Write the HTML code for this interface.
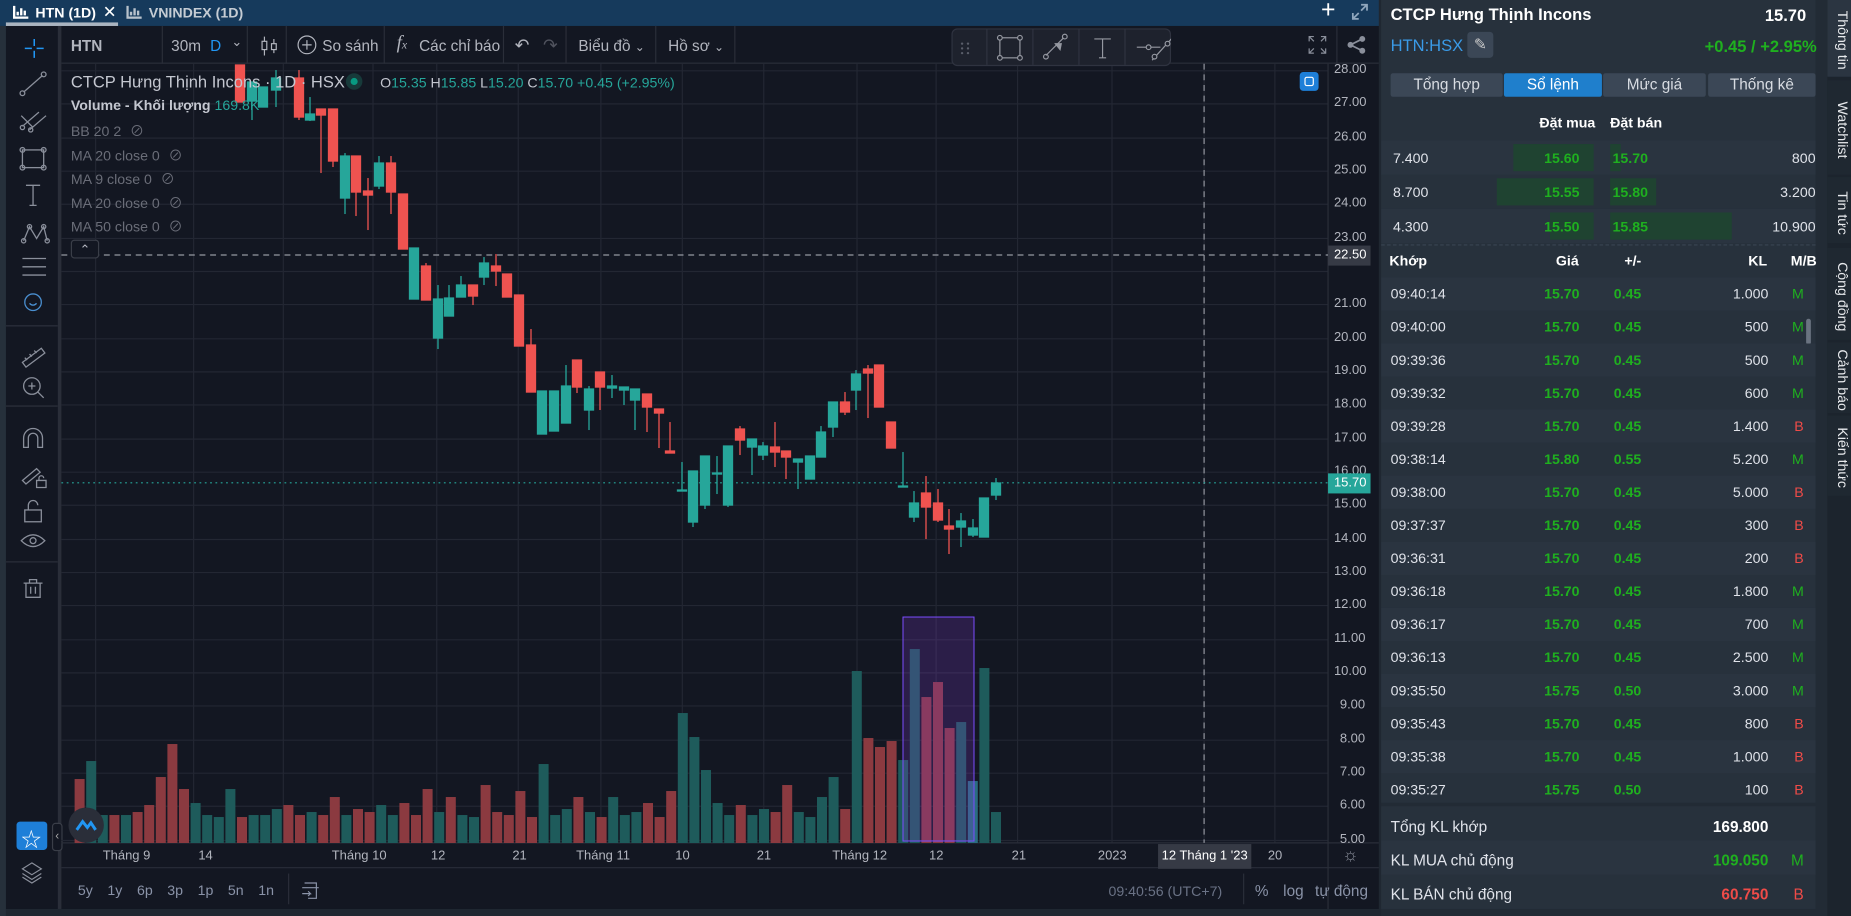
<!DOCTYPE html>
<html><head><meta charset="utf-8">
<style>
*{margin:0;padding:0;box-sizing:border-box}
html,body{width:1851px;height:916px;overflow:hidden;background:#1f2731}
body{font-family:"Liberation Sans","Noto Sans CJK SC",sans-serif}
#w{position:absolute;left:0;top:0;width:1568px;height:776px;transform:scale(1.18048);transform-origin:0 0;background:#1f2731}
.a{position:absolute;white-space:nowrap}
.tb{color:#b2b5be;font-size:13px}
.sep{position:absolute;top:22px;width:1px;height:32px;background:#2a2e39}
.pl{position:absolute;left:1130px;font-size:11px;color:#b2b5be}
.ind{position:absolute;left:60px;font-size:12px;color:#6a6d78}
.rp{position:absolute;left:1170px;width:378px;background:#27313c}
.row{position:absolute;left:1170px;width:368px;height:28px;font-size:12px;color:#e0e3ea}
.row span{position:absolute;top:7px}
.g{color:#1fb01f;font-weight:bold}
.vt{position:absolute;left:1548px;width:20px;background:#1f2831;color:#e8eaed;font-size:12px;writing-mode:vertical-rl;display:flex;align-items:flex-start;justify-content:center;padding-top:4px}
.tab{position:absolute;top:62px;height:20px;background:#3b4756;color:#d8dce2;font-size:13px;text-align:center;line-height:20px;border-radius:2px}
</style></head><body>
<div id="w">
<div class="a" style="left:0;top:0;width:1168px;height:22px;background:#163a5c"></div>
<div class="a" style="left:5px;top:22px;width:1163px;height:748px;background:#131722"></div>
<svg class="a" style="left:11px;top:4px" width="14" height="12"><path d="M1 1v10h12M4 6v3M7 3v6M10 5v4" stroke="#fff" stroke-width="2" fill="none"/></svg>
<div class="a" style="left:30px;top:4px;font-size:12px;font-weight:bold;color:#fff">HTN (1D)</div>
<div class="a" style="left:87px;top:2px;font-size:14px;color:#fff">✕</div>
<div class="a" style="left:5px;top:19px;width:95px;height:3px;background:#aab4c0"></div>
<svg class="a" style="left:107px;top:4px" width="14" height="12"><path d="M1 1v10h12M4 6v3M7 3v6M10 5v4" stroke="#b8c2cc" stroke-width="2" fill="none"/></svg>
<div class="a" style="left:126px;top:4px;font-size:12px;font-weight:bold;color:#c5ccd4">VNINDEX (1D)</div>
<div class="a" style="left:1119px;top:-3px;font-size:21px;color:#fff">+</div>
<svg class="a" style="left:1145px;top:3px" width="14" height="14"><path d="M8 1h5v5M13 1l-5 5M6 13H1V8M1 13l5-5" stroke="#8fa6bd" stroke-width="1.5" fill="none"/></svg>

<div class="a" style="left:0;top:22px;width:5px;height:754px;background:#26303b"></div>
<div class="a" style="left:49px;top:22px;width:3px;height:748px;background:#2a2e39"></div>
<svg class="a" style="left:5px;top:22px" width="44" height="748" fill="none" stroke="#8a8f9b" stroke-width="1.1">
<path d="M16 19h6M26 19h6M24 11v6M24 21v6" stroke="#2196f3" stroke-width="1.3"/>
<path d="M15 56l16-14"/><circle cx="14" cy="57" r="2"/><circle cx="32" cy="41" r="2"/>
<path d="M14 85l14-12M20 88l14-12M13 76l10 10"/><circle cx="14" cy="86" r="1.8"/><circle cx="21" cy="88" r="1.8"/>
<rect x="14" y="105" width="18" height="15"/><circle cx="14" cy="105" r="2"/><circle cx="32" cy="105" r="2"/><circle cx="14" cy="120" r="2"/><circle cx="32" cy="120" r="2"/>
<path d="M17 135h12M23 135v17M20 152h6"/>
<path d="M15 182l5-12 6 10 6-10 3 12"/><circle cx="15" cy="182" r="1.8"/><circle cx="20" cy="170" r="1.8"/><circle cx="32" cy="170" r="1.8"/><circle cx="35" cy="182" r="1.8"/>
<path d="M14 197h20M14 204h20M14 211h20"/>
<circle cx="23" cy="234" r="7" stroke="#4a8fd0"/><path d="M20 235q3 3 6 0" stroke="#4a8fd0"/>
<path d="M0 254h44" stroke="#2a2e39"/>
<path d="M14 285l16-12 3 4-16 12z M18 283l-2-2M22 280l-2-2M26 277l-2-2"/>
<circle cx="22" cy="305" r="7"/><path d="M19 305h6M22 302v6M27 310l5 5"/>
<path d="M0 322h44" stroke="#2a2e39"/>
<path d="M15 357v-8a8 8 0 0 1 16 0v8h-4v-8a4 4 0 0 0-8 0v8z"/>
<path d="M14 385l12-10 3 3-12 10zM26 385h8v6h-8zM28 385v-2a2 2 0 0 1 4 0"/>
<rect x="16" y="410" width="14" height="10"/><path d="M19 410v-4a4 4 0 0 1 8 0"/>
<path d="M13 436q10-10 20 0q-10 10-20 0z"/><circle cx="23" cy="436" r="2.5"/>
<path d="M0 454h44" stroke="#2a2e39"/>
<path d="M15 472h16M20 472v-3h6v3M17 472v12h12v-12M21 475v6M25 475v6"/>
</svg>
<div class="a" style="left:14px;top:696px;width:26px;height:24px;background:#1e7fd8;border-radius:3px"></div>
<div class="a" style="left:18px;top:697px;font-size:17px;color:#fff">☆</div>
<svg class="a" style="left:17px;top:729px" width="20" height="20" fill="none" stroke="#8a8f9b"><path d="M10 2l8 5-8 5-8-5z M2 11l8 5 8-5M2 14l8 5 8-5"/></svg>
<div class="a" style="left:44px;top:697px;width:9px;height:24px;border:1px solid #3a3e48;border-radius:3px;background:#131722;color:#aaa;font-size:10px;line-height:22px;text-align:center">‹</div>

<div class="a" style="left:52px;top:53px;width:1116px;height:1px;background:#2a2e39"></div>
<div class="a tb" style="left:60px;top:31px;font-weight:bold;color:#b2b5be;font-size:13px">HTN</div>
<div class="sep" style="left:137px"></div>
<div class="a tb" style="left:145px;top:31px">30m</div>
<div class="a tb" style="left:178px;top:31px;color:#2196f3">D</div>
<div class="a tb" style="left:196px;top:29px;font-size:11px">⌄</div>
<div class="sep" style="left:209px"></div>
<svg class="a" style="left:221px;top:30px" width="14" height="18" fill="none" stroke="#b2b5be"><path d="M3 1v16M11 3v12"/><rect x="1" y="5" width="4" height="7" fill="#131722"/><rect x="9" y="7" width="4" height="5" fill="#131722"/></svg>
<div class="sep" style="left:242px"></div>
<svg class="a" style="left:251px;top:29px" width="18" height="18" fill="none" stroke="#b2b5be"><circle cx="9" cy="9" r="7.5"/><path d="M9 5v8M5 9h8"/></svg>
<div class="a tb" style="left:273px;top:31px">So sánh</div>
<div class="sep" style="left:325px"></div>
<div class="a tb" style="left:336px;top:28px;font-size:16px;font-style:italic;font-family:'Liberation Serif',serif">f<span style="font-size:10px">x</span></div>
<div class="a tb" style="left:355px;top:31px">Các chỉ báo</div>
<div class="sep" style="left:426px"></div>
<div class="a tb" style="left:436px;top:29px;font-size:15px">↶</div>
<div class="a tb" style="left:460px;top:29px;font-size:15px;color:#50535e">↷</div>
<div class="sep" style="left:479px"></div>
<div class="a tb" style="left:490px;top:31px">Biểu đồ <span style="font-size:10px">⌄</span></div>
<div class="sep" style="left:555px"></div>
<div class="a tb" style="left:566px;top:31px">Hồ sơ <span style="font-size:10px">⌄</span></div>
<div class="sep" style="left:622px"></div>
<div class="sep" style="left:1132px"></div>
<svg class="a" style="left:1108px;top:30px" width="16" height="16" fill="none" stroke="#8a8f9b"><path d="M1 5V1h4M1 1l4 4M11 1h4v4M15 1l-4 4M1 11v4h4M1 15l4-4M15 11v4h-4M15 15l-4-4"/></svg>
<svg class="a" style="left:1141px;top:30px" width="16" height="16"><circle cx="3" cy="8" r="2.5" fill="#8a8f9b"/><circle cx="13" cy="3" r="2.5" fill="#8a8f9b"/><circle cx="13" cy="13" r="2.5" fill="#8a8f9b"/><path d="M3 8L13 3M3 8l10 5" stroke="#8a8f9b" stroke-width="1.5"/></svg>

<svg class="a" style="left:0;top:0" width="1568" height="776" viewBox="0 0 1568 776">
<g stroke="#232733" stroke-width="1">
<path d="M52 60H1125M52 88H1125M52 117H1125M52 145H1125M52 173H1125M52 202H1125M52 230H1125M52 258H1125M52 287H1125M52 315H1125M52 343H1125M52 372H1125M52 400H1125M52 428H1125M52 457H1125M52 485H1125M52 513H1125M52 542H1125M52 570H1125M52 598H1125M52 627H1125M52 655H1125M52 683H1125M52 712H1125"/>
<path d="M81 54V714M164 54V714M240 54V714M316 54V714M370 54V714M439 54V714M509 54V714M578 54V714M647 54V714M726 54V714M793 54V714M862 54V714M942 54V714M1020 54V714M1080 54V714"/>
</g>
<path d="M1125 54V770" stroke="#2a2e39"/>
<path d="M52 714H1168M52 735H1168" stroke="#2a2e39"/>
<path d="M52 216H1125" stroke="#9598a1" stroke-dasharray="5 4"/>
<path d="M1020 54V714" stroke="#9598a1" stroke-dasharray="5 4"/>
<path d="M52 409H1125" stroke="#26a69a" stroke-dasharray="1.5 3"/>
</svg>
<svg class="a" style="left:0;top:0" width="1568" height="776" viewBox="0 0 1851 916">
<defs><clipPath id="c"><rect x="62" y="64" width="1266" height="779"/></clipPath></defs>
<g clip-path="url(#c)">
<g>
<rect x="74.6" y="779" width="10" height="64" fill="#8b3a40"/>
<rect x="86.2" y="761" width="10" height="82" fill="#1e5b5b"/>
<rect x="97.8" y="815" width="10" height="28" fill="#1e5b5b"/>
<rect x="109.4" y="815" width="10" height="28" fill="#8b3a40"/>
<rect x="121" y="815" width="10" height="28" fill="#1e5b5b"/>
<rect x="132.6" y="812" width="10" height="31" fill="#8b3a40"/>
<rect x="144.2" y="805" width="10" height="38" fill="#8b3a40"/>
<rect x="155.8" y="777" width="10" height="66" fill="#8b3a40"/>
<rect x="167.4" y="744" width="10" height="99" fill="#8b3a40"/>
<rect x="179" y="789" width="10" height="54" fill="#8b3a40"/>
<rect x="190.6" y="803" width="10" height="40" fill="#1e5b5b"/>
<rect x="202.2" y="815" width="10" height="28" fill="#1e5b5b"/>
<rect x="213.8" y="817" width="10" height="26" fill="#1e5b5b"/>
<rect x="225.4" y="789" width="10" height="54" fill="#1e5b5b"/>
<rect x="237" y="817" width="10" height="26" fill="#8b3a40"/>
<rect x="248.6" y="815" width="10" height="28" fill="#1e5b5b"/>
<rect x="260.2" y="815" width="10" height="28" fill="#1e5b5b"/>
<rect x="271.8" y="809" width="10" height="34" fill="#1e5b5b"/>
<rect x="283.4" y="805" width="10" height="38" fill="#8b3a40"/>
<rect x="295" y="815" width="10" height="28" fill="#8b3a40"/>
<rect x="306.6" y="812" width="10" height="31" fill="#1e5b5b"/>
<rect x="318.2" y="815" width="10" height="28" fill="#8b3a40"/>
<rect x="329.8" y="797" width="10" height="46" fill="#8b3a40"/>
<rect x="341.4" y="815" width="10" height="28" fill="#1e5b5b"/>
<rect x="353" y="809" width="10" height="34" fill="#8b3a40"/>
<rect x="364.6" y="812" width="10" height="31" fill="#8b3a40"/>
<rect x="376.2" y="805" width="10" height="38" fill="#1e5b5b"/>
<rect x="387.8" y="815" width="10" height="28" fill="#1e5b5b"/>
<rect x="399.4" y="803" width="10" height="40" fill="#8b3a40"/>
<rect x="411" y="815" width="10" height="28" fill="#8b3a40"/>
<rect x="422.6" y="789" width="10" height="54" fill="#8b3a40"/>
<rect x="434.2" y="812" width="10" height="31" fill="#1e5b5b"/>
<rect x="445.8" y="797" width="10" height="46" fill="#8b3a40"/>
<rect x="457.4" y="815" width="10" height="28" fill="#1e5b5b"/>
<rect x="469" y="817" width="10" height="26" fill="#1e5b5b"/>
<rect x="480.6" y="785" width="10" height="58" fill="#8b3a40"/>
<rect x="492.2" y="812" width="10" height="31" fill="#8b3a40"/>
<rect x="503.8" y="815" width="10" height="28" fill="#8b3a40"/>
<rect x="515.4" y="791" width="10" height="52" fill="#8b3a40"/>
<rect x="527" y="817" width="10" height="26" fill="#8b3a40"/>
<rect x="538.6" y="764" width="10" height="79" fill="#1e5b5b"/>
<rect x="550.2" y="815" width="10" height="28" fill="#1e5b5b"/>
<rect x="561.8" y="809" width="10" height="34" fill="#1e5b5b"/>
<rect x="573.4" y="797" width="10" height="46" fill="#8b3a40"/>
<rect x="585" y="812" width="10" height="31" fill="#1e5b5b"/>
<rect x="596.6" y="817" width="10" height="26" fill="#8b3a40"/>
<rect x="608.2" y="797" width="10" height="46" fill="#1e5b5b"/>
<rect x="619.8" y="815" width="10" height="28" fill="#1e5b5b"/>
<rect x="631.4" y="812" width="10" height="31" fill="#1e5b5b"/>
<rect x="643" y="803" width="10" height="40" fill="#8b3a40"/>
<rect x="654.6" y="817" width="10" height="26" fill="#8b3a40"/>
<rect x="666.2" y="791" width="10" height="52" fill="#8b3a40"/>
<rect x="677.8" y="713" width="10" height="130" fill="#1e5b5b"/>
<rect x="689.4" y="737" width="10" height="106" fill="#1e5b5b"/>
<rect x="701" y="770" width="10" height="73" fill="#1e5b5b"/>
<rect x="712.6" y="803" width="10" height="40" fill="#1e5b5b"/>
<rect x="724.2" y="815" width="10" height="28" fill="#1e5b5b"/>
<rect x="735.8" y="805" width="10" height="38" fill="#8b3a40"/>
<rect x="747.4" y="815" width="10" height="28" fill="#1e5b5b"/>
<rect x="759" y="809" width="10" height="34" fill="#1e5b5b"/>
<rect x="770.6" y="812" width="10" height="31" fill="#8b3a40"/>
<rect x="782.2" y="785" width="10" height="58" fill="#8b3a40"/>
<rect x="793.8" y="812" width="10" height="31" fill="#1e5b5b"/>
<rect x="805.4" y="817" width="10" height="26" fill="#1e5b5b"/>
<rect x="817" y="797" width="10" height="46" fill="#1e5b5b"/>
<rect x="828.6" y="777" width="10" height="66" fill="#1e5b5b"/>
<rect x="840.2" y="809" width="10" height="34" fill="#8b3a40"/>
<rect x="851.8" y="671" width="10" height="172" fill="#1e5b5b"/>
<rect x="863.4" y="738" width="10" height="105" fill="#8b3a40"/>
<rect x="875" y="747" width="10" height="96" fill="#8b3a40"/>
<rect x="886.6" y="741" width="10" height="102" fill="#8b3a40"/>
<rect x="898.2" y="760" width="10" height="83" fill="#1e5b5b"/>
<rect x="909.8" y="649" width="10" height="194" fill="#1e5b5b"/>
<rect x="921.4" y="697" width="10" height="146" fill="#8b3a40"/>
<rect x="933" y="682" width="10" height="161" fill="#8b3a40"/>
<rect x="944.6" y="728" width="10" height="115" fill="#8b3a40"/>
<rect x="956.2" y="722" width="10" height="121" fill="#1e5b5b"/>
<rect x="967.8" y="781" width="10" height="62" fill="#2a6d80"/>
<rect x="979.4" y="668" width="10" height="175" fill="#1e5b5b"/>
<rect x="991" y="812" width="10" height="31" fill="#1e5b5b"/>
</g>
<rect x="903" y="617" width="71" height="224" fill="rgba(130,60,210,0.22)" stroke="#7c4dff" stroke-width="1"/>
<g stroke-width="1.3">
<g stroke="#ef5350" fill="#ef5350"><line x1="240" y1="65" x2="240" y2="102"/><rect x="235.5" y="65" width="9" height="37"/></g>
<g stroke="#26a69a" fill="#26a69a"><line x1="252" y1="82" x2="252" y2="120"/><rect x="247.5" y="82" width="9" height="19"/></g>
<g stroke="#26a69a" fill="#26a69a"><line x1="263" y1="87" x2="263" y2="107"/><rect x="258.5" y="87" width="9" height="20"/></g>
<g stroke="#26a69a" fill="#26a69a"><line x1="276" y1="70" x2="276" y2="107"/><rect x="271.5" y="78" width="9" height="12"/></g>
<g stroke="#ef5350" fill="#ef5350"><line x1="299" y1="70" x2="299" y2="120"/><rect x="294.5" y="78" width="9" height="39"/></g>
<g stroke="#26a69a" fill="#26a69a"><line x1="310" y1="97" x2="310" y2="121"/><rect x="305.5" y="114" width="9" height="6"/></g>
<g stroke="#ef5350" fill="#ef5350"><line x1="321" y1="109" x2="321" y2="173"/><rect x="316.5" y="109" width="9" height="6"/></g>
<g stroke="#ef5350" fill="#ef5350"><line x1="333" y1="109" x2="333" y2="167"/><rect x="328.5" y="109" width="9" height="52"/></g>
<g stroke="#26a69a" fill="#26a69a"><line x1="345" y1="153" x2="345" y2="214"/><rect x="340.5" y="156" width="9" height="42"/></g>
<g stroke="#ef5350" fill="#ef5350"><line x1="356" y1="156" x2="356" y2="216"/><rect x="351.5" y="156" width="9" height="36"/></g>
<g stroke="#ef5350" fill="#ef5350"><line x1="368" y1="178" x2="368" y2="230"/><rect x="363.5" y="191" width="9" height="4"/></g>
<g stroke="#26a69a" fill="#26a69a"><line x1="379" y1="156" x2="379" y2="189"/><rect x="374.5" y="163" width="9" height="23"/></g>
<g stroke="#ef5350" fill="#ef5350"><line x1="391" y1="156" x2="391" y2="214"/><rect x="386.5" y="163" width="9" height="29"/></g>
<g stroke="#ef5350" fill="#ef5350"><rect x="398.5" y="194" width="9" height="55"/></g>
<g stroke="#26a69a" fill="#26a69a"><rect x="409.5" y="248" width="9" height="51"/></g>
<g stroke="#ef5350" fill="#ef5350"><line x1="426" y1="263" x2="426" y2="300"/><rect x="421.5" y="266" width="9" height="34"/></g>
<g stroke="#26a69a" fill="#26a69a"><line x1="438" y1="285" x2="438" y2="349"/><rect x="433.5" y="299" width="9" height="39"/></g>
<g stroke="#26a69a" fill="#26a69a"><line x1="449" y1="285" x2="449" y2="316"/><rect x="444.5" y="298" width="9" height="18"/></g>
<g stroke="#26a69a" fill="#26a69a"><line x1="461" y1="276" x2="461" y2="297"/><rect x="456.5" y="285" width="9" height="12"/></g>
<g stroke="#ef5350" fill="#ef5350"><line x1="473" y1="285" x2="473" y2="305"/><rect x="468.5" y="285" width="9" height="11"/></g>
<g stroke="#26a69a" fill="#26a69a"><line x1="484" y1="257" x2="484" y2="285"/><rect x="479.5" y="263" width="9" height="14"/></g>
<g stroke="#ef5350" fill="#ef5350"><line x1="496" y1="254" x2="496" y2="286"/><rect x="491.5" y="266" width="9" height="5"/></g>
<g stroke="#ef5350" fill="#ef5350"><rect x="502.5" y="274" width="9" height="23"/></g>
<g stroke="#ef5350" fill="#ef5350"><rect x="514.5" y="295" width="9" height="51"/></g>
<g stroke="#ef5350" fill="#ef5350"><line x1="531" y1="329" x2="531" y2="392"/><rect x="526.5" y="345" width="9" height="47"/></g>
<g stroke="#26a69a" fill="#26a69a"><rect x="537.5" y="391" width="9" height="43"/></g>
<g stroke="#26a69a" fill="#26a69a"><rect x="549.5" y="391" width="9" height="40"/></g>
<g stroke="#26a69a" fill="#26a69a"><line x1="566" y1="365" x2="566" y2="423"/><rect x="561.5" y="386" width="9" height="37"/></g>
<g stroke="#ef5350" fill="#ef5350"><line x1="577" y1="360" x2="577" y2="393"/><rect x="572.5" y="360" width="9" height="27"/></g>
<g stroke="#26a69a" fill="#26a69a"><line x1="589" y1="386" x2="589" y2="430"/><rect x="584.5" y="389" width="9" height="21"/></g>
<g stroke="#ef5350" fill="#ef5350"><line x1="600" y1="372" x2="600" y2="410"/><rect x="595.5" y="372" width="9" height="15"/></g>
<g stroke="#26a69a" fill="#26a69a"><line x1="612" y1="375" x2="612" y2="398"/><rect x="607.5" y="386" width="9" height="2"/></g>
<g stroke="#26a69a" fill="#26a69a"><line x1="624" y1="387" x2="624" y2="405"/><rect x="619.5" y="387" width="9" height="3"/></g>
<g stroke="#26a69a" fill="#26a69a"><line x1="635" y1="389" x2="635" y2="430"/><rect x="630.5" y="389" width="9" height="11"/></g>
<g stroke="#ef5350" fill="#ef5350"><line x1="647" y1="394" x2="647" y2="432"/><rect x="642.5" y="394" width="9" height="13"/></g>
<g stroke="#ef5350" fill="#ef5350"><line x1="659" y1="409" x2="659" y2="448"/><rect x="654.5" y="409" width="9" height="4"/></g>
<g stroke="#ef5350" fill="#ef5350"><line x1="670" y1="422" x2="670" y2="453"/><rect x="665.5" y="451" width="9" height="2"/></g>
<g stroke="#26a69a" fill="#26a69a"><line x1="682" y1="462" x2="682" y2="491"/><rect x="677.5" y="490" width="9" height="1"/></g>
<g stroke="#26a69a" fill="#26a69a"><line x1="693" y1="471" x2="693" y2="527"/><rect x="688.5" y="471" width="9" height="51"/></g>
<g stroke="#26a69a" fill="#26a69a"><line x1="705" y1="456" x2="705" y2="509"/><rect x="700.5" y="456" width="9" height="49"/></g>
<g stroke="#26a69a" fill="#26a69a"><line x1="717" y1="456" x2="717" y2="494"/><rect x="712.5" y="473" width="9" height="1"/></g>
<g stroke="#26a69a" fill="#26a69a"><line x1="728" y1="446" x2="728" y2="507"/><rect x="723.5" y="446" width="9" height="59"/></g>
<g stroke="#ef5350" fill="#ef5350"><line x1="740" y1="426" x2="740" y2="455"/><rect x="735.5" y="429" width="9" height="11"/></g>
<g stroke="#26a69a" fill="#26a69a"><line x1="752" y1="439" x2="752" y2="475"/><rect x="747.5" y="439" width="9" height="8"/></g>
<g stroke="#26a69a" fill="#26a69a"><line x1="763" y1="442" x2="763" y2="460"/><rect x="758.5" y="446" width="9" height="9"/></g>
<g stroke="#ef5350" fill="#ef5350"><line x1="775" y1="422" x2="775" y2="467"/><rect x="770.5" y="447" width="9" height="5"/></g>
<g stroke="#ef5350" fill="#ef5350"><line x1="786" y1="451" x2="786" y2="479"/><rect x="781.5" y="451" width="9" height="6"/></g>
<g stroke="#26a69a" fill="#26a69a"><line x1="798" y1="459" x2="798" y2="489"/><rect x="793.5" y="459" width="9" height="3"/></g>
<g stroke="#26a69a" fill="#26a69a"><rect x="805.5" y="456" width="9" height="23"/></g>
<g stroke="#26a69a" fill="#26a69a"><line x1="821" y1="426" x2="821" y2="457"/><rect x="816.5" y="432" width="9" height="25"/></g>
<g stroke="#26a69a" fill="#26a69a"><line x1="833" y1="402" x2="833" y2="437"/><rect x="828.5" y="402" width="9" height="25"/></g>
<g stroke="#ef5350" fill="#ef5350"><line x1="845" y1="392" x2="845" y2="415"/><rect x="840.5" y="402" width="9" height="10"/></g>
<g stroke="#26a69a" fill="#26a69a"><line x1="856" y1="370" x2="856" y2="410"/><rect x="851.5" y="374" width="9" height="16"/></g>
<g stroke="#ef5350" fill="#ef5350"><line x1="868" y1="365" x2="868" y2="418"/><rect x="863.5" y="369" width="9" height="4"/></g>
<g stroke="#ef5350" fill="#ef5350"><rect x="874.5" y="365" width="9" height="42"/></g>
<g stroke="#ef5350" fill="#ef5350"><rect x="886.5" y="422" width="9" height="26"/></g>
<g stroke="#26a69a" fill="#26a69a"><line x1="903" y1="452" x2="903" y2="487"/><rect x="898.5" y="486" width="9" height="1"/></g>
<g stroke="#26a69a" fill="#26a69a"><line x1="914" y1="491" x2="914" y2="522"/><rect x="909.5" y="503" width="9" height="14"/></g>
<g stroke="#ef5350" fill="#ef5350"><line x1="926" y1="476" x2="926" y2="539"/><rect x="921.5" y="493" width="9" height="14"/></g>
<g stroke="#ef5350" fill="#ef5350"><line x1="938" y1="489" x2="938" y2="522"/><rect x="933.5" y="503" width="9" height="17"/></g>
<g stroke="#ef5350" fill="#ef5350"><line x1="949" y1="509" x2="949" y2="554"/><rect x="944.5" y="526" width="9" height="3"/></g>
<g stroke="#26a69a" fill="#26a69a"><line x1="961" y1="513" x2="961" y2="547"/><rect x="956.5" y="521" width="9" height="6"/></g>
<g stroke="#26a69a" fill="#26a69a"><line x1="973" y1="519" x2="973" y2="537"/><rect x="968.5" y="528" width="9" height="7"/></g>
<g stroke="#26a69a" fill="#26a69a"><rect x="979.5" y="498" width="9" height="39"/></g>
<g stroke="#26a69a" fill="#26a69a"><line x1="996" y1="478" x2="996" y2="500"/><rect x="991.5" y="483" width="9" height="12"/></g>
</g>
</g>
</svg>

<div class="a" style="left:806px;top:24px;width:186px;height:32px;background:#1e222d;border:1px solid #2f3340;border-radius:5px"></div>
<svg class="a" style="left:806px;top:24px" width="186" height="32" fill="none" stroke="#9598a1" stroke-width="1"><path d="M30 1v30M69 1v30M108 1v30M147 1v30" stroke="#2f3340"/>
<g fill="#5a5e6a" stroke="none"><circle cx="9" cy="13" r="1"/><circle cx="14" cy="13" r="1"/><circle cx="9" cy="17" r="1"/><circle cx="14" cy="17" r="1"/><circle cx="9" cy="21" r="1"/><circle cx="14" cy="21" r="1"/></g>
<rect x="41" y="8" width="17" height="17"/><circle cx="41" cy="8" r="2" fill="#1e222d"/><circle cx="58" cy="8" r="2" fill="#1e222d"/><circle cx="41" cy="25" r="2" fill="#1e222d"/><circle cx="58" cy="25" r="2" fill="#1e222d"/>
<path d="M80 23l15-15"/><circle cx="80" cy="24" r="2"/><circle cx="96" cy="7" r="2"/><path d="M88 13l5 0-1 5z" fill="#9598a1"/>
<path d="M121 9h14M128 9v16M125 25h6"/>
<path d="M157 16h20"/><circle cx="167" cy="16" r="2" fill="#1e222d"/>
<path d="M170 27l18-20" /><circle cx="172" cy="24" r="2" fill="#1e222d"/><circle cx="183" cy="13" r="2" fill="#1e222d"/>
</svg>
<div class="a" style="left:1101px;top:61px;width:16px;height:16px;background:#1e7fd8;border-radius:3px"></div>
<div class="a" style="left:1105px;top:65px;width:8px;height:8px;border:1.5px solid #fff;border-radius:2px"></div>

<div class="a" style="left:60px;top:61px;font-size:14px;color:#c4c7d0">CTCP Hưng Thịnh Incons · 1D · HSX</div>
<div class="a" style="left:293px;top:62px;width:14px;height:14px;border-radius:7px;background:#173a3a"></div>
<div class="a" style="left:297px;top:66px;width:6px;height:6px;border-radius:3px;background:#089981"></div>
<div class="a" style="left:322px;top:63px;font-size:12px;color:#c4c7d0">O<span style="color:#26a69a">15.35</span> H<span style="color:#26a69a">15.85</span> L<span style="color:#26a69a">15.20</span> C<span style="color:#26a69a">15.70</span> <span style="color:#26a69a">+0.45 (+2.95%)</span></div>
<div class="a" style="left:60px;top:82px;font-size:12px;color:#c4c7d0;font-weight:bold">Volume - Khối lượng <span style="color:#26a69a;font-weight:normal">169.8K</span></div>
<div class="ind" style="top:102px">BB 20 2 <span style="margin-left:4px">⊘</span></div>
<div class="ind" style="top:123px">MA 20 close 0 <span style="margin-left:4px">⊘</span></div>
<div class="ind" style="top:143px">MA 9 close 0 <span style="margin-left:4px">⊘</span></div>
<div class="ind" style="top:163px">MA 20 close 0 <span style="margin-left:4px">⊘</span></div>
<div class="ind" style="top:183px">MA 50 close 0 <span style="margin-left:4px">⊘</span></div>
<div class="a" style="left:60px;top:203px;width:24px;height:16px;border:1px solid #3a3e48;border-radius:3px;background:#131722;color:#b2b5be;font-size:11px;text-align:center;line-height:16px">⌃</div>
<div class="a" style="left:58px;top:684px;width:30px;height:30px;border-radius:15px;background:#2a2e39"></div>
<svg class="a" style="left:62px;top:688px" width="22" height="22"><path d="M3 15l5-7 4 5 3-4 4 6" stroke="#2196f3" stroke-width="2.5" fill="none"/></svg>

<div class="pl" style="top:53px">28.00</div><div class="pl" style="top:81px">27.00</div><div class="pl" style="top:110px">26.00</div><div class="pl" style="top:138px">25.00</div><div class="pl" style="top:166px">24.00</div><div class="pl" style="top:195px">23.00</div>
<div class="pl" style="top:251px">21.00</div><div class="pl" style="top:280px">20.00</div><div class="pl" style="top:308px">19.00</div><div class="pl" style="top:336px">18.00</div><div class="pl" style="top:365px">17.00</div><div class="pl" style="top:393px">16.00</div><div class="pl" style="top:421px">15.00</div><div class="pl" style="top:450px">14.00</div><div class="pl" style="top:478px">13.00</div><div class="pl" style="top:506px">12.00</div><div class="pl" style="top:535px">11.00</div><div class="pl" style="top:563px">10.00</div><div class="pl" style="top:591px;left:1135px">9.00</div><div class="pl" style="top:620px;left:1135px">8.00</div><div class="pl" style="top:648px;left:1135px">7.00</div><div class="pl" style="top:676px;left:1135px">6.00</div><div class="pl" style="top:705px;left:1135px">5.00</div>
<div class="a" style="left:1125px;top:208px;width:36px;height:17px;background:#363a45;color:#fff;font-size:11px;line-height:17px;padding-left:5px">22.50</div>
<div class="a" style="left:1125px;top:401px;width:36px;height:17px;background:#26a69a;color:#fff;font-size:11px;line-height:17px;padding-left:5px">15.70</div>

<div class="a" style="top:719px;left:0;width:1125px;font-size:11px;color:#b2b5be">
<span class="a" style="left:87px">Tháng 9</span><span class="a" style="left:168px">14</span><span class="a" style="left:281px">Tháng 10</span><span class="a" style="left:365px">12</span><span class="a" style="left:434px">21</span><span class="a" style="left:488px">Tháng 11</span><span class="a" style="left:572px">10</span><span class="a" style="left:641px">21</span><span class="a" style="left:705px">Tháng 12</span><span class="a" style="left:787px">12</span><span class="a" style="left:857px">21</span><span class="a" style="left:930px">2023</span><span class="a" style="left:1074px">20</span></div>
<div class="a" style="left:981px;top:715px;width:79px;height:21px;background:#363a45;color:#fff;font-size:11px;line-height:21px;text-align:center">12 Tháng 1 '23</div>
<div class="a" style="left:1137px;top:716px;font-size:15px;color:#8a8f9b">☼</div>

<div class="a" style="left:66px;top:747px;font-size:12px;color:#8a93a8;word-spacing:9px">5y 1y 6p 3p 1p 5n 1n</div>
<div class="a" style="left:244px;top:740px;width:1px;height:26px;background:#2a2e39"></div>
<svg class="a" style="left:255px;top:745px" width="16" height="18" fill="none" stroke="#8a93a8"><path d="M3 3h10v13H6M1 7h14M1 12h7l-2-2M8 12l-2 2"/></svg>
<div class="a" style="left:939px;top:748px;font-size:12px;color:#6a7285">09:40:56 (UTC+7)</div>
<div class="a" style="left:1053px;top:740px;width:1px;height:26px;background:#2a2e39"></div>
<div class="a" style="left:1063px;top:747px;font-size:13px;color:#8a93a8">%</div>
<div class="a" style="left:1087px;top:747px;font-size:13px;color:#8a93a8">log</div>
<div class="a" style="left:1114px;top:747px;font-size:13px;color:#8a93a8">tự động</div>

<div class="rp" style="top:0;height:776px;background:#222b35"></div>
<div class="rp" style="top:0;height:680px;width:368px"></div>
<div class="a" style="left:1178px;top:4px;font-size:14px;font-weight:bold;color:#fff">CTCP Hưng Thịnh Incons</div>
<div class="a" style="left:1495px;top:5px;font-size:14px;font-weight:bold;color:#fff">15.70</div>
<div class="a" style="left:1178px;top:30px;font-size:14px;color:#3a9be8">HTN:HSX</div>
<div class="a" style="left:1243px;top:27px;width:22px;height:22px;background:#3b4756;border-radius:3px;color:#ccc;font-size:13px;text-align:center;line-height:22px">✎</div>
<div class="a" style="left:1444px;top:31px;font-size:14px;font-weight:bold;color:#1fb01f">+0.45 / +2.95%</div>
<div class="tab" style="left:1178px;width:95px">Tổng hợp</div>
<div class="tab" style="left:1274px;width:83px;background:#1f7fcc;color:#fff">Sổ lệnh</div>
<div class="tab" style="left:1358px;width:87px">Mức giá</div>
<div class="tab" style="left:1447px;width:91px">Thống kê</div>
<div class="a" style="left:1304px;top:97px;font-size:12px;font-weight:bold;color:#fff">Đặt mua</div>
<div class="a" style="left:1364px;top:97px;font-size:12px;font-weight:bold;color:#fff">Đặt bán</div>
<div class="a" style="left:1170px;top:119px;width:368px;height:29px;background:#2a3440"></div>
<div class="a" style="left:1170px;top:177px;width:368px;height:29px;background:#2a3440"></div>
<div class="a" style="left:1282px;top:122px;width:68px;height:23px;background:#1f4331"></div>
<div class="a" style="left:1364px;top:122px;width:9px;height:23px;background:#1f4331"></div>
<div class="a" style="left:1268px;top:151px;width:82px;height:23px;background:#1f4331"></div>
<div class="a" style="left:1364px;top:151px;width:39px;height:23px;background:#1f4331"></div>
<div class="a" style="left:1313px;top:180px;width:37px;height:23px;background:#1f4331"></div>
<div class="a" style="left:1364px;top:180px;width:103px;height:23px;background:#1f4331"></div>
<div class="row" style="top:120px"><span style="left:10px">7.400</span><span class="g" style="left:138px">15.60</span><span class="g" style="left:196px">15.70</span><span style="right:0">800</span></div>
<div class="row" style="top:149px"><span style="left:10px">8.700</span><span class="g" style="left:138px">15.55</span><span class="g" style="left:196px">15.80</span><span style="right:0">3.200</span></div>
<div class="row" style="top:178px"><span style="left:10px">4.300</span><span class="g" style="left:138px">15.50</span><span class="g" style="left:196px">15.85</span><span style="right:0">10.900</span></div>
<div class="a" style="left:1170px;top:207px;width:368px;border-top:1px dashed #3a4552"></div>
<div class="row" style="top:207px;font-weight:bold;color:#fff"><span style="left:7px">Khớp</span><span style="left:148px">Giá</span><span style="left:206px">+/-</span><span style="left:311px">KL</span><span style="left:347px">M/B</span></div>
<div class="a" style="left:1530px;top:270px;width:4px;height:22px;background:#6a7380;border-radius:2px"></div>
<div class="a" style="left:1170px;top:683px;width:368px;height:87px;background:#27313c"></div>
<div class="a" style="left:1170px;top:712px;width:368px;height:29px;background:#2a3440"></div>
<div class="row" style="top:686px;font-size:13px"><span style="left:8px">Tổng KL khớp</span><span style="right:40px;font-weight:bold;color:#fff">169.800</span></div>
<div class="row" style="top:714px;font-size:13px"><span style="left:8px">KL MUA chủ động</span><span class="g" style="right:40px">109.050</span><span style="right:10px;color:#1fb01f">M</span></div>
<div class="row" style="top:743px;font-size:13px"><span style="left:8px">KL BÁN chủ động</span><span style="right:40px;font-weight:bold;color:#ef4b48">60.750</span><span style="right:10px;color:#ef4b48">B</span></div>

<div class="row" style="top:235px;background:#2a3440"><span style="left:8px">09:40:14</span><span class="g" style="left:138px">15.70</span><span class="g" style="left:197px">0.45</span><span style="right:40px">1.000</span><span style="right:10px;color:#1fb01f">M</span></div>
<div class="row" style="top:263px"><span style="left:8px">09:40:00</span><span class="g" style="left:138px">15.70</span><span class="g" style="left:197px">0.45</span><span style="right:40px">500</span><span style="right:10px;color:#1fb01f">M</span></div>
<div class="row" style="top:291px;background:#2a3440"><span style="left:8px">09:39:36</span><span class="g" style="left:138px">15.70</span><span class="g" style="left:197px">0.45</span><span style="right:40px">500</span><span style="right:10px;color:#1fb01f">M</span></div>
<div class="row" style="top:319px"><span style="left:8px">09:39:32</span><span class="g" style="left:138px">15.70</span><span class="g" style="left:197px">0.45</span><span style="right:40px">600</span><span style="right:10px;color:#1fb01f">M</span></div>
<div class="row" style="top:347px;background:#2a3440"><span style="left:8px">09:39:28</span><span class="g" style="left:138px">15.70</span><span class="g" style="left:197px">0.45</span><span style="right:40px">1.400</span><span style="right:10px;color:#ef4b48">B</span></div>
<div class="row" style="top:375px"><span style="left:8px">09:38:14</span><span class="g" style="left:138px">15.80</span><span class="g" style="left:197px">0.55</span><span style="right:40px">5.200</span><span style="right:10px;color:#1fb01f">M</span></div>
<div class="row" style="top:403px;background:#2a3440"><span style="left:8px">09:38:00</span><span class="g" style="left:138px">15.70</span><span class="g" style="left:197px">0.45</span><span style="right:40px">5.000</span><span style="right:10px;color:#ef4b48">B</span></div>
<div class="row" style="top:431px"><span style="left:8px">09:37:37</span><span class="g" style="left:138px">15.70</span><span class="g" style="left:197px">0.45</span><span style="right:40px">300</span><span style="right:10px;color:#ef4b48">B</span></div>
<div class="row" style="top:459px;background:#2a3440"><span style="left:8px">09:36:31</span><span class="g" style="left:138px">15.70</span><span class="g" style="left:197px">0.45</span><span style="right:40px">200</span><span style="right:10px;color:#ef4b48">B</span></div>
<div class="row" style="top:487px"><span style="left:8px">09:36:18</span><span class="g" style="left:138px">15.70</span><span class="g" style="left:197px">0.45</span><span style="right:40px">1.800</span><span style="right:10px;color:#1fb01f">M</span></div>
<div class="row" style="top:515px;background:#2a3440"><span style="left:8px">09:36:17</span><span class="g" style="left:138px">15.70</span><span class="g" style="left:197px">0.45</span><span style="right:40px">700</span><span style="right:10px;color:#1fb01f">M</span></div>
<div class="row" style="top:543px"><span style="left:8px">09:36:13</span><span class="g" style="left:138px">15.70</span><span class="g" style="left:197px">0.45</span><span style="right:40px">2.500</span><span style="right:10px;color:#1fb01f">M</span></div>
<div class="row" style="top:571px;background:#2a3440"><span style="left:8px">09:35:50</span><span class="g" style="left:138px">15.75</span><span class="g" style="left:197px">0.50</span><span style="right:40px">3.000</span><span style="right:10px;color:#1fb01f">M</span></div>
<div class="row" style="top:599px"><span style="left:8px">09:35:43</span><span class="g" style="left:138px">15.70</span><span class="g" style="left:197px">0.45</span><span style="right:40px">800</span><span style="right:10px;color:#ef4b48">B</span></div>
<div class="row" style="top:627px;background:#2a3440"><span style="left:8px">09:35:38</span><span class="g" style="left:138px">15.70</span><span class="g" style="left:197px">0.45</span><span style="right:40px">1.000</span><span style="right:10px;color:#ef4b48">B</span></div>
<div class="row" style="top:655px"><span style="left:8px">09:35:27</span><span class="g" style="left:138px">15.75</span><span class="g" style="left:197px">0.50</span><span style="right:40px">100</span><span style="right:10px;color:#ef4b48">B</span></div>

<div class="a" style="left:1548px;top:0;width:20px;height:776px;background:#1c242d"></div>
<div class="vt" style="top:0;height:65px;background:#2b3541">Thông tin</div>
<div class="vt" style="top:68px;height:80px">Watchlist</div>
<div class="vt" style="top:150px;height:56px">Tin tức</div>
<div class="vt" style="top:210px;height:78px">Cộng đồng</div>
<div class="vt" style="top:290px;height:60px">Cảnh báo</div>
<div class="vt" style="top:352px;height:68px">Kiến thức</div>
</div>
</body></html>
